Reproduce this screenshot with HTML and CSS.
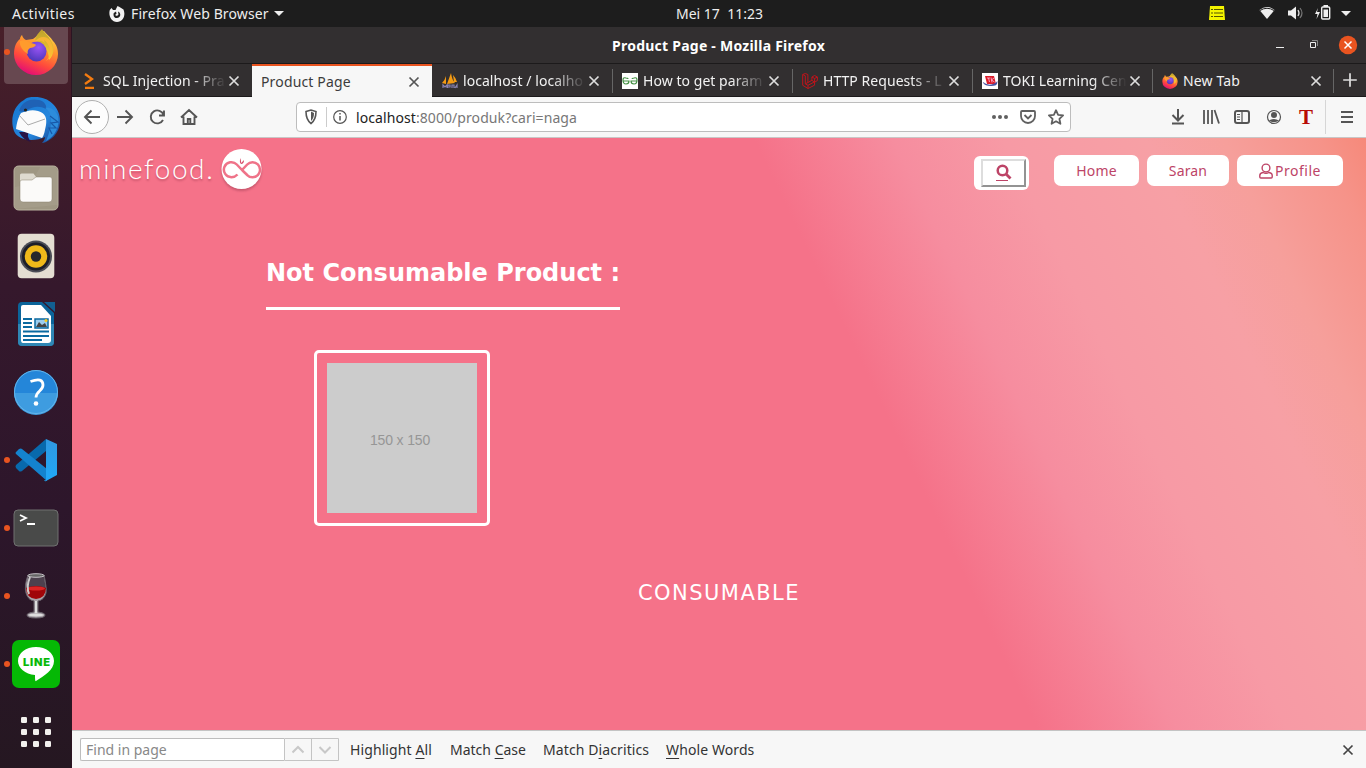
FILE: index.html
```html
<!DOCTYPE html>
<html lang="id">
<head>
<meta charset="utf-8">
<title>Product Page</title>
<link rel="stylesheet" href="styles.css">
</head>
<body>
<svg width="0" height="0" class="defs">
  <defs>
    <linearGradient id="ffBody" x1=".8" y1="0" x2=".35" y2="1"><stop offset="0" stop-color="#ffe04a"/><stop offset=".35" stop-color="#ff9a2e"/><stop offset=".7" stop-color="#ff4a3c"/><stop offset="1" stop-color="#e20c77"/></linearGradient>
    <linearGradient id="ffFlame" x1="0" y1="0" x2="0" y2="1"><stop offset="0" stop-color="#bba02c"/><stop offset="1" stop-color="#ffcf32"/></linearGradient>
    <radialGradient id="ffGlobe" cx=".6" cy=".3" r=".8"><stop offset="0" stop-color="#9a54f5"/><stop offset="1" stop-color="#4434b4"/></radialGradient>
    <linearGradient id="tb" x1="0" y1="0" x2="1" y2="1"><stop offset="0" stop-color="#1676cf"/><stop offset=".6" stop-color="#2586dd"/><stop offset="1" stop-color="#163b87"/></linearGradient>
    <linearGradient id="vs" x1="0" y1="0" x2="0" y2="1"><stop offset="0" stop-color="#3098e0"/><stop offset="1" stop-color="#20a8f8"/></linearGradient>
    <symbol id="firefox" viewBox="0 0 46 46">
      <path d="M20 10C25 7 27 2 31 2c2 3 7 6 9 10 4 4 5 9 5 13a22 21 0 0 1-44 0C1 18 3 13 7 10c0-2 1-3 2-4 1 3 2 4 4 5z" fill="url(#ffBody)"/>
      <path d="M22 11C24 4 28 2 29 0c2 4 7 7 9 12 4 6 3 14-2 19 0-9-4-15-14-20z" fill="url(#ffFlame)"/>
      <circle cx="23.500" cy="22.500" r="10" fill="url(#ffGlobe)"/>
      <path d="M7 12c5-2 8 0 10 2 3 0 5 1 6 2-1 2-4 3-6 3-1 1-3 2-2 6-5-3-9-8-8-13z" fill="#ff9b2c"/>
      <path d="M22 13c5-3 9 0 10 1l-1-3c7 5 8 15 2 21 7-4 8-13 5-19-4-7-12-6-16 0z" fill="#ffb636" opacity=".8"/>
    </symbol>
    <symbol id="close" viewBox="0 0 12 12"><path d="M1.500 1.500l9 9M10.500 1.500l-9 9" fill="none" stroke="currentColor" stroke-width="1.700"/></symbol>
  </defs>
</svg>

<header class="topbar">
  <span class="activities">Activities</span>
  <svg class="ff-mono" width="16" height="16" viewBox="0 0 16 16"><path fill="#f2f2f2" fill-rule="evenodd" d="M2.500 2l1.500 2h2.500L8.500 0l2 1 4 2.500c2.500 6-.5 12.500-6.500 12.500S-.8 9 .8 4zM7 5.500L4.800 7c-1 3 .8 5 3 5 3 0 4.500-3 2.700-5.500L9 5.500l.5 3L8 10 6 9l1.500-1.300z"/></svg>
  <span class="app-name">Firefox Web Browser</span>
  <i class="caret"></i>
  <span class="clock">Mei 17&nbsp; 11:23</span>
  <svg class="tray" width="160" height="27" viewBox="0 0 160 27">
    <path d="M3 6h14l1 14H2z" fill="#f4f400"/><path d="M4 9.500h2M7 9.500h9M4 13h2M7 13h9M4 16.500h2M7 16.500h9" stroke="#555500" stroke-width="1.200"/>
    <path d="M52.500 10Q60 4 67.500 10L60 19z" fill="#eee"/><path d="M53 10.500q7-4.500 14 0" stroke="#1d1d1d" fill="none" stroke-width="1"/>
    <path d="M81 10.500h3l5-4v13l-5-4h-3z" fill="#eee"/><path d="M91 10q2 3 0 6" stroke="#ddd" stroke-width="1.300" fill="none"/><path d="M93 8q4 5 0 10" stroke="#777" stroke-width="1.200" fill="none"/>
    <path d="M111 8l-3 6h2.500l-1 5 3.500-7H110z" fill="#eee"/><rect x="114.700" y="7" width="8" height="12" rx="1" fill="none" stroke="#eee" stroke-width="1.400"/><path d="M116.500 9.500h4.500v7.500h-4.500zM116.500 5h4.500v2h-4.500z" fill="#eee"/>
    <path d="M134 11h10l-5 5z" fill="#eee"/>
  </svg>
</header>

<div class="desktop">
  <nav class="dock">
    <div class="app current running"><svg class="dock-ff" width="46" height="46"><use href="#firefox"/></svg></div>
    <div class="app"><svg width="48" height="48" viewBox="0 0 48 48">
      <path d="M12 4c3-3 7-3 9-3 15-1 26 9 27 22 1 12-8 22-18 24 2-2 3-4 3-6-10 5-27 4-31-6C-2 24 1 10 12 4z" fill="url(#tb)"/>
      <path d="M7 36c3 6 8 9 12 10-3-4-4-7-2-10z" fill="#281447"/>
      <path d="M9 17c5-2 11-4 17-2 8 2 9 8 8 14-1 5-2 11-4 13L4 33c1-7 2-11 5-16z" fill="#fbfbfb"/>
      <path d="M7 19l9 10 17-6" fill="none" stroke="#aaa" stroke-width="1"/>
      <path d="M7 15c3-9 10-13 20-11 5 1 8 5 7 9-7-4-14-2-19 1-3 2-5 2-8 1z" fill="#1f62b5"/>
      <path d="M33 12c8 4 8 17 1 33 10-5 14-16 12-25-3-7-8-9-13-8z" fill="#2d8cdc"/><path d="M38 20l8 6-7 1 5 5-7 0 3 6" fill="none" stroke="#1858a8" stroke-width="1.200"/>
      <circle cx="13.500" cy="14" r="1.600" fill="#24211c"/></svg></div>
    <div class="app"><svg width="46" height="46" viewBox="0 0 46 46"><rect x="1" y="1" width="44" height="44" rx="4.500" fill="#9f9783" stroke="#b9b29f"/><path d="M2 22C15 20 24 10 27 2h13q4 0 4 4v34L2 44z" fill="#aaa28f" opacity=".5"/><path d="M7 18v-8q0-1.500 1.500-1.500h12l3 4V18z" fill="#dedacf"/><path d="M7 17q0-2 2-2h10l4-3h14q2 0 2 2v20q0 3-3 3H10q-3 0-3-3z" fill="#fbfaf9" stroke="#8b826e" stroke-width=".5"/></svg></div>
    <div class="app"><svg width="38" height="46" viewBox="0 0 38 46"><rect x=".7" y=".7" width="36.600" height="44.600" rx="4" fill="#e4ded2"/><circle cx="19" cy="23.500" r="16" fill="#4b4d56"/><circle cx="19" cy="23.500" r="14" fill="#1d1f29"/><circle cx="19" cy="23.500" r="11.200" fill="#efb91a"/><circle cx="19" cy="23.500" r="5.200" fill="#25272b"/></svg></div>
    <div class="app"><svg width="38" height="46" viewBox="0 0 38 46"><path d="M5 1h20l12 11v29q0 4-4 4H5q-4 0-4-4V5q0-4 4-4z" fill="#0b649a"/><path d="M1 23h36v18q0 4-4 4H5q-4 0-4-4z" fill="#2f87b5"/><path d="M6 4h18l10 11v24q0 3-3 3H6q-2 0-2-3V6q0-2 2-2z" fill="#fff"/><path d="M27 1h11v10z" fill="#125f91"/><path d="M6 18h9M6 22h9M6 26h9M6 30.500h26M6 35h26M6 39h19" stroke="#0b6aa0" stroke-width="2"/><path d="M18 18h13v9H18z" fill="#9ccdef" stroke="#0b6aa0" stroke-width="1.500"/><path d="M19 26l3-5 3 3 3-2 2 4z" fill="#444"/><circle cx="29" cy="19.500" r="1.500" fill="#f8c91b"/></svg></div>
    <div class="app"><svg width="46" height="46" viewBox="0 0 46 46"><circle cx="23" cy="23" r="22" fill="#2486d9"/><path d="M1 24h44a22 22 0 0 1-44 0z" fill="#3e9ce0"/><circle cx="23" cy="23" r="21.500" fill="none" stroke="#64b5ea"/><path d="M17.500 12.500q12.500-4.500 12.500 3.500c0 6-7 6-7 12.500" fill="none" stroke="#fff" stroke-width="2.800"/><circle cx="23" cy="34.500" r="2.300" fill="#fff"/></svg></div>
    <div class="app running"><svg width="44" height="44" viewBox="0 0 44 44"><path d="M32 1v12L8 33q-2 1-3 0l-3-3q-1-2 0-3z" fill="#0869ac"/><path d="M2 14l3-3q2-1 3 0l25 20v12L2 16q-1-1 0-2z" fill="#1483ce"/><path d="M32 1l11 5v31l-11 6q-1 1-2-1c2 1 2 0 2-2z" fill="url(#vs)"/></svg></div>
    <div class="app running"><svg width="46" height="38" viewBox="0 0 46 38"><rect x="1" y="1" width="44" height="36" rx="4" fill="#494a49" stroke="#707170"/><path d="M7 6l6 3-6 3M14 15h8" fill="none" stroke="#fff" stroke-width="1.800"/></svg></div>
    <div class="app running"><svg width="26" height="48" viewBox="0 0 26 48"><path d="M5 3h16q3 14 2 18-2 7-8 8v11q7 1 7 3 0 3-9 3t-9-3q0-2 7-3V29q-6-1-8-8Q1 14 5 3z" fill="#aaa3aa" stroke="#676069"/><path d="M5 5h16l2 12H3z" fill="#4d414e"/><path d="M3 16q10-4 20 0 0 10-10 11Q3 26 3 16z" fill="#a00509"/><ellipse cx="13" cy="16.500" rx="9" ry="2" fill="#dc2525"/><path d="M7 5Q3 15 6 22" stroke="#ccc" stroke-width="2" fill="none"/><ellipse cx="13" cy="3.500" rx="8" ry="1.800" fill="#666" stroke="#c5c0c5"/><path d="M12 29h2v12h-2z" fill="#ddd"/><ellipse cx="13" cy="43" rx="7.500" ry="1.500" fill="#ddd"/></svg></div>
    <div class="app running"><svg width="48" height="48" viewBox="0 0 48 48"><rect width="48" height="48" rx="7" fill="#05b805"/><path d="M24 7c10 0 18 6 18 14 0 9-10 15-18 20-1 1-1-4-1-6C13 34 6 28 6 21 6 13 14 7 24 7z" fill="#fff"/><text x="24.500" y="26" text-anchor="middle" textLength="27" class="line-label">LINE</text></svg></div>
    <div class="app"><svg width="30" height="30" viewBox="0 0 30 30" fill="#f2f0ee"><rect width="6" height="6" rx="1.300"/><rect x="12" width="6" height="6" rx="1.300"/><rect x="24" width="6" height="6" rx="1.300"/><rect y="12" width="6" height="6" rx="1.300"/><rect x="12" y="12" width="6" height="6" rx="1.300"/><rect x="24" y="12" width="6" height="6" rx="1.300"/><rect y="24" width="6" height="6" rx="1.300"/><rect x="12" y="24" width="6" height="6" rx="1.300"/><rect x="24" y="24" width="6" height="6" rx="1.300"/></svg></div>
  </nav>

  <main class="window">
    <div class="titlebar">
      <span class="window-title">Product Page - Mozilla Firefox</span>
      <svg class="controls" width="90" height="37" viewBox="0 0 90 37"><path d="M0 20.500h8" stroke="#eee"/><path d="M34.500 15.500h5v5h-5z" fill="none" stroke="#eee"/><path d="M36 13.500h5.500V19" fill="none" stroke="#888"/><circle cx="72" cy="18" r="9.200" fill="#e95420"/><path d="M68.500 14.500l7 7M75.500 14.500l-7 7" stroke="#fff" stroke-width="1.500"/></svg>
    </div>

    <div class="tabs">
      <div class="tab"><svg class="fav" width="16" height="16" viewBox="0 0 16 16"><path d="M3 1l7 5-7 5M3 15h9" fill="none" stroke="#f57c10" stroke-width="2.300"/></svg><span class="label">SQL Injection - Pra</span><svg class="x"><use href="#close"/></svg></div>
      <div class="tab active"><span class="label">Product Page</span><svg class="x"><use href="#close"/></svg></div>
      <div class="tab"><svg class="fav" width="16" height="16" viewBox="0 0 16 16"><path d="M0 10q3-3 4-7v8zM5 11L9 0q1 7 4 10zM12 9l-1-7q3 3 4 7z" fill="#f49b13"/><path d="M1 15v-3l2 2 2-2v3m1 0v-3h2v2H7m3 1v-3h2v3m1 0l2-3v3" stroke="#8983b2" fill="none" stroke-width="1.200"/></svg><span class="label">localhost / localho</span><svg class="x"><use href="#close"/></svg></div>
      <div class="tab"><svg class="fav" width="16" height="16" viewBox="0 0 16 16"><path d="M0 0h16v16H0z" fill="#fff"/><path d="M1 8h6q0 3-3 3T1 7q0-3 3-2 2 0 2 1M15 8H9q0 3 3 3t3-4q0-3-3-2-2 0-2 1" fill="none" stroke="#449044" stroke-width="1.200"/></svg><span class="label">How to get param</span><svg class="x"><use href="#close"/></svg></div>
      <div class="tab"><svg class="fav" width="16" height="16" viewBox="0 0 16 16"><path d="M.7 1.500l2.600-1 2.600 1v8l4-2.200V4l2.700-1.500L15.400 4v3.500l-2.800 1.700v3L6 15.500.7 12.300zM.7 1.500l2.600 1.300v8L6 12.300m0-2.800l-2.700 1.300M6 12.300l6.600-3.500m-2.700-4.800l2.700 1.500 2.800-1.500m-2.800 1.500v3.700L9.900 7.300M6 12.300v3.200" fill="none" stroke="#c0141b" stroke-width="1"/></svg><span class="label">HTTP Requests - L</span><svg class="x"><use href="#close"/></svg></div>
      <div class="tab"><svg class="fav" width="16" height="16" viewBox="0 0 16 16"><path d="M0 0h16v16H0z" fill="#fff"/><path d="M3 3h9l2 8H5z" fill="#db1c29"/><path d="M5 5h3M6.500 5l1 4M9 4.500l1 5M12 5l-2.500 2 3 2" stroke="#fbd" stroke-width=".8" fill="none"/><path d="M5 11q-5-1-4-2 5 4 10 2 5-2 4-4 2 6-6 6Q3 13 1 10" fill="#4650a0"/></svg><span class="label">TOKI Learning Cen</span><svg class="x"><use href="#close"/></svg></div>
      <div class="tab last"><svg class="fav" width="16" height="16"><use href="#firefox"/></svg><span class="label">New Tab</span><svg class="x"><use href="#close"/></svg></div>
      <svg class="new-tab" width="32" height="33" viewBox="0 0 32 33"><path d="M16 9.500v14M9 16.500h14" stroke="#ddd" stroke-width="1.800"/></svg>
    </div>

    <div class="toolbar">
      <svg class="nav-icons" width="140" height="40" viewBox="0 0 140 40" fill="none" stroke="#555" stroke-width="1.900"><circle cx="20" cy="20" r="16.500" fill="#fdfdfd" stroke="#b0b0b0" stroke-width="1"/><path d="M28 20H13M19.500 13.500L13 20l6.500 6.500M45 20h15M53.500 13.500L60 20l-6.500 6.500"/><path d="M92 13.500v5h-5M91.500 18a6.500 6.500 0 1 0-.5 5"/><path d="M109 20.500l8-7.500 8 7.500M111.500 19.500V27h11v-7.500M115.800 27v-5h2.500v5"/></svg>
      <div class="urlbar">
        <svg width="58" height="28" viewBox="0 0 58 28" fill="none" stroke="#555"><path d="M9 8.500l5-1.500 5 1.500c0 6-1 9-5 12-4-3-5-6-5-12z" stroke-width="1.600"/><path d="M14 8.500v9.500c2-2 3-4 3-8z" fill="#555" stroke="none"/><path d="M29.500 4v20" stroke="#ccc"/><circle cx="43" cy="14" r="6.300" stroke-width="1.200"/><path d="M43 13v4.500M43 10v1.500" stroke-width="1.500"/></svg>
        <span class="url"><b>localhost</b>:8000/produk?cari=naga</span>
        <svg class="url-actions" width="84" height="28" viewBox="0 0 84 28" fill="none" stroke="#606060" stroke-width="1.800"><g fill="#606060" stroke="none"><circle cx="7" cy="14" r="2"/><circle cx="13" cy="14" r="2"/><circle cx="19" cy="14" r="2"/></g><path d="M35 8h12q1 0 1 1v4a7 7 0 0 1-14 0V9q0-1 1-1zM37.500 12l3.500 3.500 3.500-3.500"/><path d="M69 7.200l2.100 4.600 5 .6-3.700 3.400 1 5-4.400-2.500-4.400 2.500 1-5-3.700-3.400 5-.6z" stroke-linejoin="round"/></svg>
      </div>
      <svg class="tools" width="206" height="40" viewBox="0 0 206 40" fill="none" stroke="#555" stroke-width="2"><path d="M18 12v11M12.500 18l5.500 5.500 5.500-5.500M12 26.500h12"/><path d="M44 13v14M48 13v14M52 13v14M54.500 13l4.500 13.500" stroke-width="1.800"/><rect x="75" y="14" width="14" height="12" rx="2"/><path d="M82 14v12M77 17.500h3M77 20h3M77 22.500h3" stroke-width="1.200"/><circle cx="114" cy="20" r="6.500" stroke-width="1.200"/><circle cx="114" cy="18" r="3" fill="#555" stroke="none"/><path d="M109 23.500q5-3 10 0-5 3.500-10 0z" fill="#555" stroke="none"/><path class="bar-divider" d="M165.500 3v34"/><path d="M181 15h12M181 20h12M181 25h12"/><text x="146" y="27" text-anchor="middle" class="t-icon">T</text></svg>
    </div>

    <section class="page">
      <header class="site-header">
        <span class="brand">minefood.</span>
        <svg class="brand-mark" width="46" height="46" viewBox="0 0 46 46"><circle cx="22.500" cy="22" r="20" fill="#fff"/><path d="M18.500 27.500Q16 30.200 12.500 30.200a7.500 7.500 0 1 1 5.300-12.700L23 23l5.200-5.500a7.500 7.500 0 1 1 0 10.500L23.500 23.500" fill="none" stroke="#ef7389" stroke-width="2.500"/><path d="M21.500 11l.7 5 2.800-3q0 4-3 4-2-2-.5-6z" fill="#d64b68"/></svg>
        <div class="search"><button class="search-btn"><svg width="16" height="18" viewBox="0 0 16 18"><circle cx="6.500" cy="6.500" r="4.800" fill="none" stroke="#bd4467" stroke-width="2.500"/><path d="M10 10l4.500 4.500" stroke="#bd4467" stroke-width="2.800"/><path d="M0 16.500h12" stroke="#bd4467"/></svg></button></div>
        <a class="pill home"><span>Home</span></a>
        <a class="pill saran"><span>Saran</span></a>
        <a class="pill profile"><svg width="14" height="16" viewBox="0 0 14 16"><circle cx="7" cy="5" r="3.900" fill="none" stroke="#bd4467" stroke-width="1.400"/><path d="M4 9.500Q.8 10 .8 12.500V14q0 1 1 1h10.400q1 0 1-1v-1.500Q13.200 10 10 9.500q-3 1.600-6 0z" fill="none" stroke="#bd4467" stroke-width="1.400"/></svg><span>Profile</span></a>
      </header>
      <div class="products">
        <h2 class="heading">Not Consumable Product :</h2>
        <div class="card"><div class="thumb"><span>150 x 150</span></div></div>
      </div>
      <p class="consumable">CONSUMABLE</p>
    </section>

    <footer class="findbar">
      <div class="find-input">Find in page</div>
      <svg class="find-nav" width="55" height="23" viewBox="0 0 55 23" fill="none"><path d="M.5.500h54v22H.5zM27.500.5v22" stroke="#c4c4c4"/><path d="M8.500 14.500L14 9l5.500 5.500M35.500 9l5.500 5.500L46.500 9" stroke="#c8c8c8" stroke-width="2"/></svg>
      <span class="opt o1">Highlight <u>A</u>ll</span><span class="opt o2">Match <u>C</u>ase</span><span class="opt o3">Match D<u>i</u>acritics</span><span class="opt o4"><u>W</u>hole Words</span>
      <svg class="find-close" width="12" height="12"><use href="#close"/></svg>
    </footer>
  </main>
</div>
</body>
</html>
```
FILE: styles.css
```css
* { box-sizing: border-box; }
body { margin: 0; width: 1366px; height: 768px; overflow: hidden; font-family: "Noto Sans", sans-serif; font-size: 14px; line-height: 20px; white-space: nowrap; }
svg { display: block; flex: none; }
.defs { position: absolute; }
.topbar { position: relative; display: flex; align-items: center; height: 27px; padding-left: 12px; background: #1d1d1d; color: #eee; }
.activities { width: 97px; letter-spacing: .45px; }
.ff-mono { margin-right: 6px; }
.app-name { width: 138px; letter-spacing: .12px; }
.caret { margin-left: 5px; border: 5px solid transparent; border-top-color: #eee; border-bottom: 0; }
.clock { margin-left: 392px; width: 87px; }
.tray { margin-left: auto; margin-right: -1px; }
.desktop { display: flex; height: 741px; }
.dock { width: 72px; flex: none; overflow: hidden; background: linear-gradient(#481f29, #35182c 35%, #2d162b 65%, #251721); border-right: 1px solid #2c1422; }
.app { position: relative; display: flex; align-items: center; justify-content: center; height: 68px; width: 72px; }
.app:first-child { margin-top: -9px; }
.current::before { content: ""; position: absolute; left: 4px; top: 4px; width: 64px; height: 62px; border-radius: 4px; background: #674850; }
.dock-ff { position: relative; }
.running::after { content: ""; position: absolute; left: 4px; top: 31px; width: 6px; height: 6px; border-radius: 50%; background: #e95420; }
.line-label { font: 800 11px "Inter", sans-serif; fill: #05b805; stroke: #05b805; stroke-width: .2px; }
.window { flex: 1; min-width: 0; display: flex; flex-direction: column; }
.titlebar { height: 37px; display: flex; align-items: center; background: #322f30; color: #fff; font-weight: 700; border-bottom: 1px solid #1c1a1b; }
.window-title { margin-left: 540px; padding-top: 2px; letter-spacing: .24px; }
.controls { margin-left: auto; }
.tabs { display: flex; height: 33px; background: #322f30; color: #f2f2f2; }
.tab { position: relative; width: 180px; display: flex; align-items: center; padding-left: 10px; padding-right: 12px; border-bottom: 1px solid #1c1a1b; }
.tab::after { content: ""; position: absolute; right: -1px; top: 5px; width: 1px; height: 24px; background: #666; }
.tab:first-child::after, .active::after { display: none; }
.tab.last { width: 182px; padding-right: 12px; }
.last::after { right: 0; }
.fav { margin-right: 5px; position: relative; top: 1px; }
.label { width: 124px; padding-top: 2px; margin-right: 2px; letter-spacing: .05px; -webkit-mask-image: linear-gradient(90deg, #000 72%, transparent); mask-image: linear-gradient(90deg, #000 72%, transparent); }
.active .label, .last .label { -webkit-mask-image: none; mask-image: none; letter-spacing: .15px; }
.x { width: 12px; height: 12px; margin-left: auto; margin-top: 2px; color: #ddd; }
.active { background: #f7f7f7; color: #3c3c3c; border-top: 2px solid #e95420; border-bottom: 0; padding-left: 9px; padding-bottom: 2px; }
.active .x { color: #555; }
.new-tab { border-bottom: 1px solid #1c1a1b; }
.toolbar { height: 41px; display: flex; background: #f7f7f7; border-bottom: 1px solid #c9c6c6; }
.bar-divider { stroke: #d6d6d6; stroke-width: 1px; }
.urlbar { display: flex; align-items: center; margin: 5px 0 0 84px; width: 775px; height: 30px; border: 1px solid #bdbdbd; border-radius: 4px; background: #fff; }
.url { color: #777; margin-left: 1px; padding-top: 1px; letter-spacing: .08px; }
.url b { color: #222; font-weight: 400; }
.url-actions { margin-left: auto; margin-right: -1px; }
.tools { margin-left: auto; }
.t-icon { font: 700 21px "Liberation Serif", serif; fill: #b70b05; stroke: none; }
.page { height: 592px; background: linear-gradient(64.3deg, #f57289 61.2%, #f68d9f 70%, #f79aa5 77%, #f7a0a5 86%, #f69f9b 91%, #f69389 97%, #f6897a); color: #fff; }
.site-header { display: flex; align-items: flex-start; height: 121px; padding-right: 23px; }
.brand { margin: 12px 0 0 7px; font: 300 28px/36px Lato, sans-serif; letter-spacing: 1.6px; text-shadow: 0 2px 2px rgba(130, 40, 60, .4); width: 136px; }
.brand-mark { margin: 9px 0 0 4px; filter: drop-shadow(0 2px 1px rgba(120, 40, 60, .35)); }
.search { margin: 18px 25px 0 auto; padding: 3px 3px 3px 7px; width: 55px; height: 34px; border-radius: 6px; background: #fff; }
.search-btn { display: flex; justify-content: center; align-items: center; width: 45px; height: 28px; padding: 0; border: 2px solid; border-color: #ddd #939393 #939393 #ddd; background: #fff; }
.pill { display: flex; justify-content: center; align-items: center; height: 31px; margin: 17px 0 0 8px; border-radius: 7px; background: #fff; color: #bd4467; letter-spacing: .15px; }
.search + .pill { margin-left: 0; }
.home { width: 85px; }
.saran { width: 82px; }
.profile { width: 106px; gap: 2px; letter-spacing: .5px; }
.products { padding-left: 194px; }
.heading { margin: 0; width: 354px; height: 51px; border-bottom: 3px solid #fff; font: 700 24px/28px "DejaVu Sans", sans-serif; }
.card { margin: 40px 0 0 48px; width: 176px; height: 176px; padding: 10px; border: 3px solid #fff; border-radius: 5px; }
.thumb { display: flex; align-items: center; justify-content: center; height: 150px; padding: 4px 4px 0 0; background: #ccc; color: #969696; font: 14px "Liberation Sans", sans-serif; letter-spacing: -.15px; }
.consumable { margin: 53px 0 0 566px; font: 21px/28px "DejaVu Sans", sans-serif; letter-spacing: 1.45px; }
.findbar { height: 38px; display: flex; align-items: center; padding: 0 12px 0 8px; background: #f7f7f7; border-top: 1px solid #c4c4c4; color: #333; }
.find-input { width: 204px; height: 23px; border: 1px solid #bdbdbd; border-right: 0; padding-left: 5px; line-height: 22px; color: #888; background: #fff; border-radius: 2px 0 0 2px; }
.opt { letter-spacing: .1px; }
.o1 { margin-left: 11px; width: 100px; }
.o2 { width: 93px; letter-spacing: 0; }
.o3 { width: 123px; }
.opt u { text-underline-offset: 3px; }
.find-close { margin-left: auto; color: #444; }
```
